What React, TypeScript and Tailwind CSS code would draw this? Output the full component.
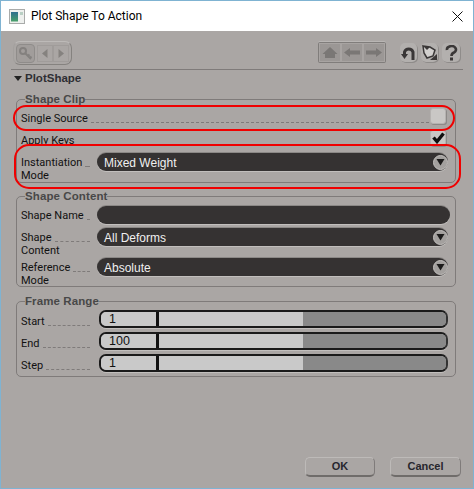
import React from "react";

const uiFont = "font-['Liberation_Sans',Arial,sans-serif]";
const labelFont = "font-['Roboto',sans-serif] text-[11px] leading-[13px] text-[#111]";

function Leader() {
    return <div className="flex-1 min-w-0 ml-[3px] mb-[2px] self-end border-b border-dashed border-[#7f7b7a]" />;
}

function Row({
    label,
    second,
    height = "h-[22px]",
    labelTop = "pt-[6px]",
    children,
}: {
    label: string;
    second?: string;
    height?: string;
    labelTop?: string;
    children: React.ReactNode;
}) {
    return (
        <div className={`flex items-start ${height}`}>
            <div className={`w-[69px] shrink-0 ${labelTop} ${labelFont}`}>
                <div className="flex h-[13px]">
                    <span className="whitespace-nowrap">{label}</span>
                    <Leader />
                </div>
                {second && <div>{second}</div>}
            </div>
            <div className="ml-[7px] flex-1 min-w-0 pt-[2px]">{children}</div>
        </div>
    );
}

function CheckRow({ label, checked }: { label: string; checked?: boolean }) {
    return (
        <div className="flex h-[22px] items-start">
            <div className={`flex flex-1 h-[13px] mt-[6px] ${labelFont}`}>
                <span className="whitespace-nowrap">{label}</span>
                <Leader />
            </div>
            <div className="w-[16px] h-[16px] mt-[2px] ml-[1px] mr-[4px] rounded-[3px] bg-[#c9c7c5] border border-[#b5b2b0] shadow-[1px_1px_0_#8d8a88] flex items-center justify-center">
                {checked && (
                    <svg width="13" height="12" viewBox="0 0 13 12">
                        <path d="M1.5 5.5 L5 9.5 L11.5 1.5" fill="none" stroke="#111" strokeWidth="3.4" />
                    </svg>
                )}
            </div>
        </div>
    );
}

function Dropdown({ value }: { value: string }) {
    return (
        <div className="flex items-center h-[18px] mt-[1px] mr-[2px] rounded-full bg-[#353232] shadow-[0_-1px_0_#8b8886,0_1px_0_#c2bfbd] pl-[7px] text-[12px] text-[#f0f0f0]">
            <span className="flex-1 pt-[2px] leading-[14px]">{value}</span>
            <div className="w-[15px] h-[15px] rounded-full bg-[#a3a09e] border border-[#c4c1bf] flex items-center justify-center">
                <svg width="9" height="8" viewBox="0 0 9 8">
                    <path d="M0.5 1 H8.5 L4.5 7.5 Z" fill="#1c1b1b" />
                </svg>
            </div>
        </div>
    );
}

function NumberSlider({ value }: { value: string }) {
    return (
        <div className="flex h-[18px] ml-[2px] mr-[2px] rounded-[7px] border-2 border-[#1a1a1a] border-r-[#333] overflow-hidden shadow-[0_1px_0_#c2bfbd] text-[12.5px] leading-[14px] text-[#111]">
            <div className="w-[55px] bg-[#c9c9c9] pl-[8px]">{value}</div>
            <div className="w-[3px] bg-[#111]" />
            <div className="w-[144px] bg-[#c9c9c9]" />
            <div className="flex-1 bg-[#898989]" />
        </div>
    );
}

function Group({ title, gap = "mb-[6px]", children }: { title: string; gap?: string; children: React.ReactNode }) {
    return (
        <fieldset className={`border border-[#7f7b7a] rounded-[5px] pl-[4px] pr-[5px] ${gap}`}>
            <legend className="ml-[4px] h-[14px] text-[11.5px] tracking-[0.1px] leading-[14px] font-bold text-[#484848]">{title}</legend>
            {children}
        </fieldset>
    );
}

function ToolCell({ children }: { children: React.ReactNode }) {
    return (
        <div className="w-[22px] h-[19px] bg-[#9b9795] border border-[#a8a4a2] flex items-center justify-center">
            {children}
        </div>
    );
}

export default function App() {
    return (
        <div className={`${uiFont} relative w-[474px] h-[489px] border border-[#7fb3d2] flex flex-col bg-[#aaa6a4] overflow-hidden`}>
            <div className="h-[30px] shrink-0 bg-white flex items-center pl-[8px] pr-[10px]">
                <svg width="16" height="15" viewBox="0 0 16 15" className="shrink-0">
                    <defs>
                        <linearGradient id="win" x1="0" y1="0" x2="0" y2="1">
                            <stop offset="0" stopColor="#2f6f8f" />
                            <stop offset="1" stopColor="#48a06a" />
                        </linearGradient>
                    </defs>
                    <rect x="0.5" y="0.5" width="15" height="14" fill="#eef0ee" stroke="#a9abaa" />
                    <rect x="2" y="3" width="7" height="9.5" fill="url(#win)" />
                    <rect x="11" y="3" width="3" height="3" fill="#b9cfc4" />
                </svg>
                <span className="ml-[6px] flex-1 font-['Roboto',sans-serif] text-[12px] text-black">Plot Shape To Action</span>
                <svg width="11" height="11" viewBox="0 0 11 11">
                    <path d="M0.5 0.5 L10.5 10.5 M10.5 0.5 L0.5 10.5" stroke="#111" strokeWidth="1" />
                </svg>
            </div>

            <div className="flex-1 min-h-0 flex flex-col pl-[15px] pr-[17px]">
                <div className="-ml-[5px] -mr-[7px] pr-[3px] h-[39px] shrink-0 border-b border-[#7f7b7a] flex items-start">
                    <div className="mt-[10px] ml-[2px] w-[59px] h-[24px] rounded-[7px] border border-[#a3a09e] border-r-[#85827f] border-b-[#85827f] border-t-[#bdbab8] flex items-center pl-[2px]">
                        <div className="w-[19px] h-[19px] rounded-[4px] border border-[#8f8c8a] bg-[#a19d9b] flex items-center justify-center">
                            <svg width="15" height="15" viewBox="0 0 15 15">
                                <circle cx="5" cy="5" r="3" fill="none" stroke="#84817f" strokeWidth="2" />
                                <path d="M7 7 L13 13 M10 10 L11.5 8.5 M12 12 L13.5 10.5" stroke="#84817f" strokeWidth="2" fill="none" />
                            </svg>
                        </div>
                        <div className="ml-[2px] w-[16px] h-[17px] border border-[#a09c9a] flex items-center justify-center">
                            <svg width="6" height="9" viewBox="0 0 6 9"><path d="M5.5 0 V9 L0 4.5 Z" fill="#85827f" /></svg>
                        </div>
                        <div className="w-[16px] h-[17px] border border-[#a09c9a] flex items-center justify-center">
                            <svg width="6" height="9" viewBox="0 0 6 9"><path d="M0.5 0 V9 L6 4.5 Z" fill="#85827f" /></svg>
                        </div>
                    </div>

                    <div className="ml-auto mt-[11px] flex items-center p-[1px] rounded-[2px] bg-[#807d7b] shadow-[0_-1px_0_#b9b6b4]">
                        <ToolCell>
                            <svg width="16" height="11" viewBox="0 0 16 11"><path d="M8 0 L15.5 7 H13 V11 H3 V7 H0.5 Z" fill="#7a7775" /></svg>
                        </ToolCell>
                        <ToolCell>
                            <svg width="16" height="9" viewBox="0 0 16 9"><path d="M0 4.5 L6 0 V2.5 H16 V6.5 H6 V9 Z" fill="#7a7775" /></svg>
                        </ToolCell>
                        <ToolCell>
                            <svg width="16" height="9" viewBox="0 0 16 9"><path d="M16 4.5 L10 0 V2.5 H0 V6.5 H10 V9 Z" fill="#7a7775" /></svg>
                        </ToolCell>
                    </div>

                    <div className="ml-[14px] mt-[12px] flex gap-[4px]">
                        <div className="w-[17px] h-[19px] rounded-[5px] bg-[#b3b0ae] shadow-[1px_1px_0_#8f8c8a] flex items-center justify-center">
                            <svg width="15" height="16" viewBox="0 0 15 16">
                                <path d="M12 15 V7 A4.5 4.5 0 0 0 3.5 7 V10" fill="none" stroke="#3a3737" strokeWidth="3" />
                                <path d="M0 9 H7 L3.5 14 Z" fill="#3a3737" />
                            </svg>
                        </div>
                        <div className="w-[17px] h-[19px] rounded-[5px] bg-[#b3b0ae] shadow-[1px_1px_0_#8f8c8a] flex items-center justify-center">
                            <svg width="15" height="15" viewBox="0 0 15 15">
                                <path d="M1 1 L8 2 L13 5 L11 11 L5 13 L2 8 Z" fill="#d2d0ce" stroke="#3a3737" strokeWidth="1.5" />
                                <path d="M15 9 V15 H8 Z" fill="#3a3737" />
                                <path d="M1 1 L8 2 L5 5 Z" fill="#3a3737" />
                            </svg>
                        </div>
                        <div className="w-[18px] h-[19px] rounded-[5px] bg-[#b3b0ae] shadow-[1px_1px_0_#8f8c8a] flex items-center justify-center">
                            <svg width="13" height="16" viewBox="0 0 13 16">
                                <path d="M2 5 A4.5 3.5 0 1 1 9 7.5 Q6.5 8.5 6.5 11" fill="none" stroke="#3a3737" strokeWidth="2.6" />
                                <rect x="5" y="12.5" width="3" height="3" fill="#3a3737" />
                            </svg>
                        </div>
                    </div>
                </div>

                <div className="h-[22px] shrink-0 flex items-center -ml-[2px] pb-[5px]">
                    <svg width="8" height="5" viewBox="0 0 8 5"><path d="M0 0 H8 L4 5 Z" fill="#222" /></svg>
                    <span className="ml-[3px] text-[11.5px] font-bold text-[#2e2e33]">PlotShape</span>
                </div>

                <Group title="Shape Clip">
                    <CheckRow label="Single Source" />
                    <CheckRow label="Apply Keys" checked />
                    <Row label="Instantiation" second="Mode" height="h-[32px]">
                        <Dropdown value="Mixed Weight" />
                    </Row>
                </Group>

                <Group title="Shape Content" gap="mb-[7px]">
                    <Row label="Shape Name">
                        <div className="h-[18px] mt-[1px] rounded-full bg-[#353232] shadow-[0_-1px_0_#8b8886,0_1px_0_#c2bfbd]" />
                    </Row>
                    <Row label="Shape" second="Content" height="h-[30px]">
                        <Dropdown value="All Deforms" />
                    </Row>
                    <Row label="Reference" second="Mode" height="h-[31px]">
                        <Dropdown value="Absolute" />
                    </Row>
                </Group>

                <Group title="Frame Range">
                    <Row label="Start" labelTop="pt-[7px]"><NumberSlider value="1" /></Row>
                    <Row label="End" labelTop="pt-[7px]"><NumberSlider value="100" /></Row>
                    <Row label="Step" labelTop="pt-[7px]"><NumberSlider value="1" /></Row>
                    <div className="h-[2px]" />
                </Group>

                <div className="mt-auto mb-[11px] -mr-[5px] flex justify-end gap-[15px] text-[11px] font-bold text-[#27272e]">
                    <button className="w-[70px] h-[20px] rounded-[5px] bg-[#aaa6a4] border-t border-l border-[#bdbab8] border-b-2 border-r border-b-[#6f6c6a] border-r-[#7f7b7a]">OK</button>
                    <button className="w-[71px] h-[20px] rounded-[5px] bg-[#aaa6a4] border-t border-l border-[#bdbab8] border-b-2 border-r border-b-[#6f6c6a] border-r-[#7f7b7a]">Cancel</button>
                </div>
            </div>

            <div className="absolute left-[12px] top-[104px] w-[442px] h-[26px] rounded-[13px] border-2 border-[#f00000]" />
            <div className="absolute left-[13px] top-[143px] w-[447px] h-[45px] rounded-[15px] border-2 border-[#f00000]" />
        </div>
    );
}
